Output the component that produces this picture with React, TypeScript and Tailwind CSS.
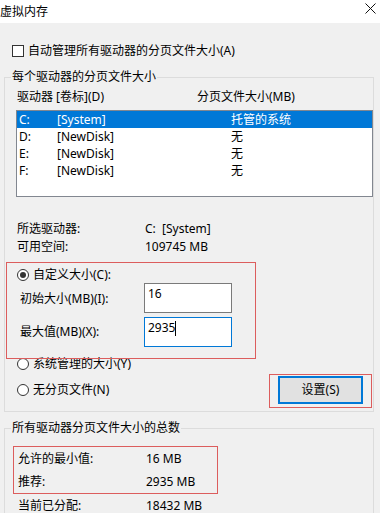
import React from "react";

const FONT = {
  fontFamily: '"Noto Sans", "Noto Sans CJK SC", sans-serif',
};

function Radio({ checked }: { checked?: boolean }) {
  return (
    <span className="w-[12px] h-[12px] rounded-full border border-[#333] bg-white flex items-center justify-center shrink-0">
      {checked && <span className="w-[6px] h-[6px] rounded-full bg-[#333]" />}
    </span>
  );
}

const drives = [
  { letter: "C:", label: "[System]", size: "托管的系统", selected: true },
  { letter: "D:", label: "[NewDisk]", size: "无" },
  { letter: "E:", label: "[NewDisk]", size: "无" },
  { letter: "F:", label: "[NewDisk]", size: "无" },
];

export default function App() {
  return (
    <div
      className="w-[380px] h-[513px] overflow-hidden bg-[#f0f0f0] text-[12px] leading-[16px] text-black flex flex-col"
      style={FONT}
    >
      {/* Title bar */}
      <div className="h-[23px] bg-white flex items-center justify-between shrink-0">
        <span className="pt-[1px]">虚拟内存</span>
        <svg width="11" height="11" viewBox="0 0 11 11" className="mr-[4px] mb-[6px]">
          <path d="M0.5 0.5 L10.5 10.5 M10.5 0.5 L0.5 10.5" stroke="#111" strokeWidth="1" />
        </svg>
      </div>

      {/* Auto manage checkbox */}
      <div className="mt-[20px] h-[16px] pl-[12px] flex items-center gap-[4px]">
        <span className="w-[12px] h-[12px] border border-[#333] bg-white shrink-0" />
        <span>自动管理所有驱动器的分页文件大小(A)</span>
      </div>

      {/* Per-drive group */}
      <fieldset className="mt-[10px] ml-[4px] mr-[6px] border border-[#dcdcdc] pb-[7px] shrink-0">
        <legend className="ml-[6px] px-[1px]">每个驱动器的分页文件大小</legend>

        <div className="pt-[4px] h-[20px] flex">
          <span className="ml-[12px] w-[180px]">驱动器 [卷标](D)</span>
          <span>分页文件大小(MB)</span>
        </div>

        {/* Drive list */}
        <div className="mt-[5px] ml-[11px] h-[87px] border border-[#828790] bg-white">
          {drives.map((d) => (
            <div
              key={d.letter}
              className={
                "h-[17px] flex items-center pl-[2px] " +
                (d.selected ? "bg-[#0078d7] text-white" : "")
              }
            >
              <span className="w-[38px]">{d.letter}</span>
              <span className="w-[174px]">{d.label}</span>
              <span>{d.size}</span>
            </div>
          ))}
        </div>

        <div className="mt-[24px] ml-[12px] flex flex-col gap-[2px]">
          <div className="flex">
            <span className="w-[128px]">所选驱动器:</span>
            <span>C:&nbsp;&nbsp;[System]</span>
          </div>
          <div className="flex">
            <span className="w-[128px]">可用空间:</span>
            <span>109745 MB</span>
          </div>
        </div>

        {/* Custom size */}
        <div className="relative mt-[12px]">
          <div className="h-[16px] ml-[12px] flex items-center gap-[4px]">
            <Radio checked />
            <span>自定义大小(C):</span>
          </div>
          <div className="h-[30px] flex items-center">
            <span className="ml-[15px] w-[124px] pt-[1px]">初始大小(MB)(I):</span>
            <div className="w-[88px] h-[30px] border border-[#7a7a7a] bg-white pl-[3px] pt-[2px]">16</div>
          </div>
          <div className="mt-[4px] h-[30px] flex items-center">
            <span className="ml-[15px] w-[124px]">最大值(MB)(X):</span>
            <div className="w-[88px] h-[30px] border border-[#0078d7] bg-white pl-[3px] pt-[2px] flex items-start">
              <span>2935</span>
              <span className="mt-[1px] w-px h-[15px] bg-black" />
            </div>
          </div>
          <div className="absolute left-[1px] top-[-5px] w-[250px] h-[97px] border border-[#dc5d5d] pointer-events-none" />
        </div>

        <div className="mt-[9px] h-[16px] ml-[12px] flex items-center gap-[4px]">
          <Radio />
          <span>系统管理的大小(Y)</span>
        </div>

        <div className="mt-[4px] h-[28px] flex items-center justify-between">
          <div className="ml-[12px] flex items-center gap-[4px]">
            <Radio />
            <span>无分页文件(N)</span>
          </div>
          <div className="relative mr-[10px]">
            <button className="w-[85px] h-[28px] bg-[#e1e1e1] border-2 border-[#0078d7] text-[12px] leading-[16px]">
              设置(S)
            </button>
            <div className="absolute left-[-9px] top-[-2px] w-[103px] h-[34px] border border-[#dc5d5d] pointer-events-none" />
          </div>
        </div>
      </fieldset>

      {/* Totals group */}
      <fieldset className="mt-[8px] ml-[4px] mr-[6px] border border-[#dcdcdc] shrink-0">
        <legend className="ml-[6px] px-[1px]">所有驱动器分页文件大小的总数</legend>
        <div className="pt-[10px]">
          <div className="ml-[8px] w-[205px] border border-[#dc5d5d]">
            <div className="h-[23px] pl-[4px] flex items-center">
              <span className="w-[128px]">允许的最小值:</span>
              <span>16 MB</span>
            </div>
            <div className="h-[23px] pl-[4px] flex items-center">
              <span className="w-[128px]">推荐:</span>
              <span>2935 MB</span>
            </div>
          </div>
          <div className="h-[24px] ml-[13px] flex items-center">
            <span className="w-[128px]">当前已分配:</span>
            <span>18432 MB</span>
          </div>
        </div>
      </fieldset>
    </div>
  );
}
